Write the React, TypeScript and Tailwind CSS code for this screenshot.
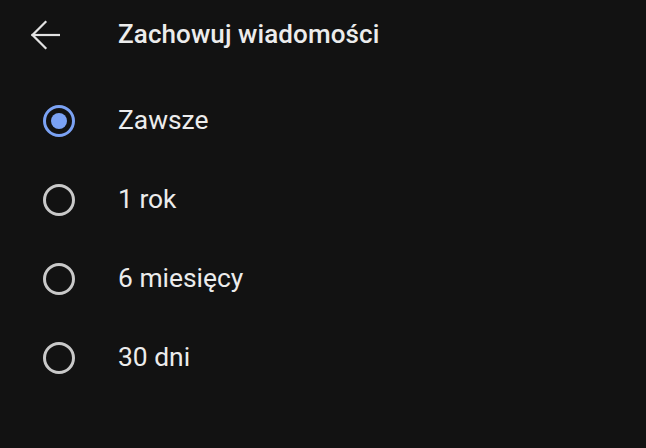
import React from "react";

const options = ["Zawsze", "1 rok", "6 miesięcy", "30 dni"];

function Radio({ checked }: { checked: boolean }) {
  return (
    <div
      className={
        "w-[32px] h-[32px] rounded-full border-[3px] flex items-center justify-center " +
        (checked ? "border-[#7ba2f4]" : "border-[#c9c9c9]")
      }
    >
      {checked && <div className="w-[16px] h-[16px] rounded-full bg-[#7ba2f4]" />}
    </div>
  );
}

export default function App() {
  return (
    <div
      className="w-[646px] h-[448px] bg-[#121212] text-[#ececec] overflow-hidden"
      style={{ fontFamily: "Roboto, 'Noto Sans', sans-serif" }}
    >
      <div className="h-[69px] flex items-center">
        <div className="w-[118px] flex items-center pl-[30px]">
          <svg width="30" height="30" viewBox="0 0 30 30" fill="none" stroke="#e2e2e2" strokeWidth="2.2" strokeLinecap="square">
            <path d="M29 15H2.5" />
            <path d="M15.5 2L2.5 15l13 13" />
          </svg>
        </div>
        <div className="text-[26px] font-medium tracking-[0.1px]">Zachowuj wiadomości</div>
      </div>
      <div className="mt-[12px]">
        {options.map((o, i) => (
          <div key={o} className="h-[79px] flex items-center">
            <div className="w-[118px] flex items-center pl-[43px]">
              <Radio checked={i === 0} />
            </div>
            <div className="text-[26.4px]">{o}</div>
          </div>
        ))}
      </div>
    </div>
  );
}
